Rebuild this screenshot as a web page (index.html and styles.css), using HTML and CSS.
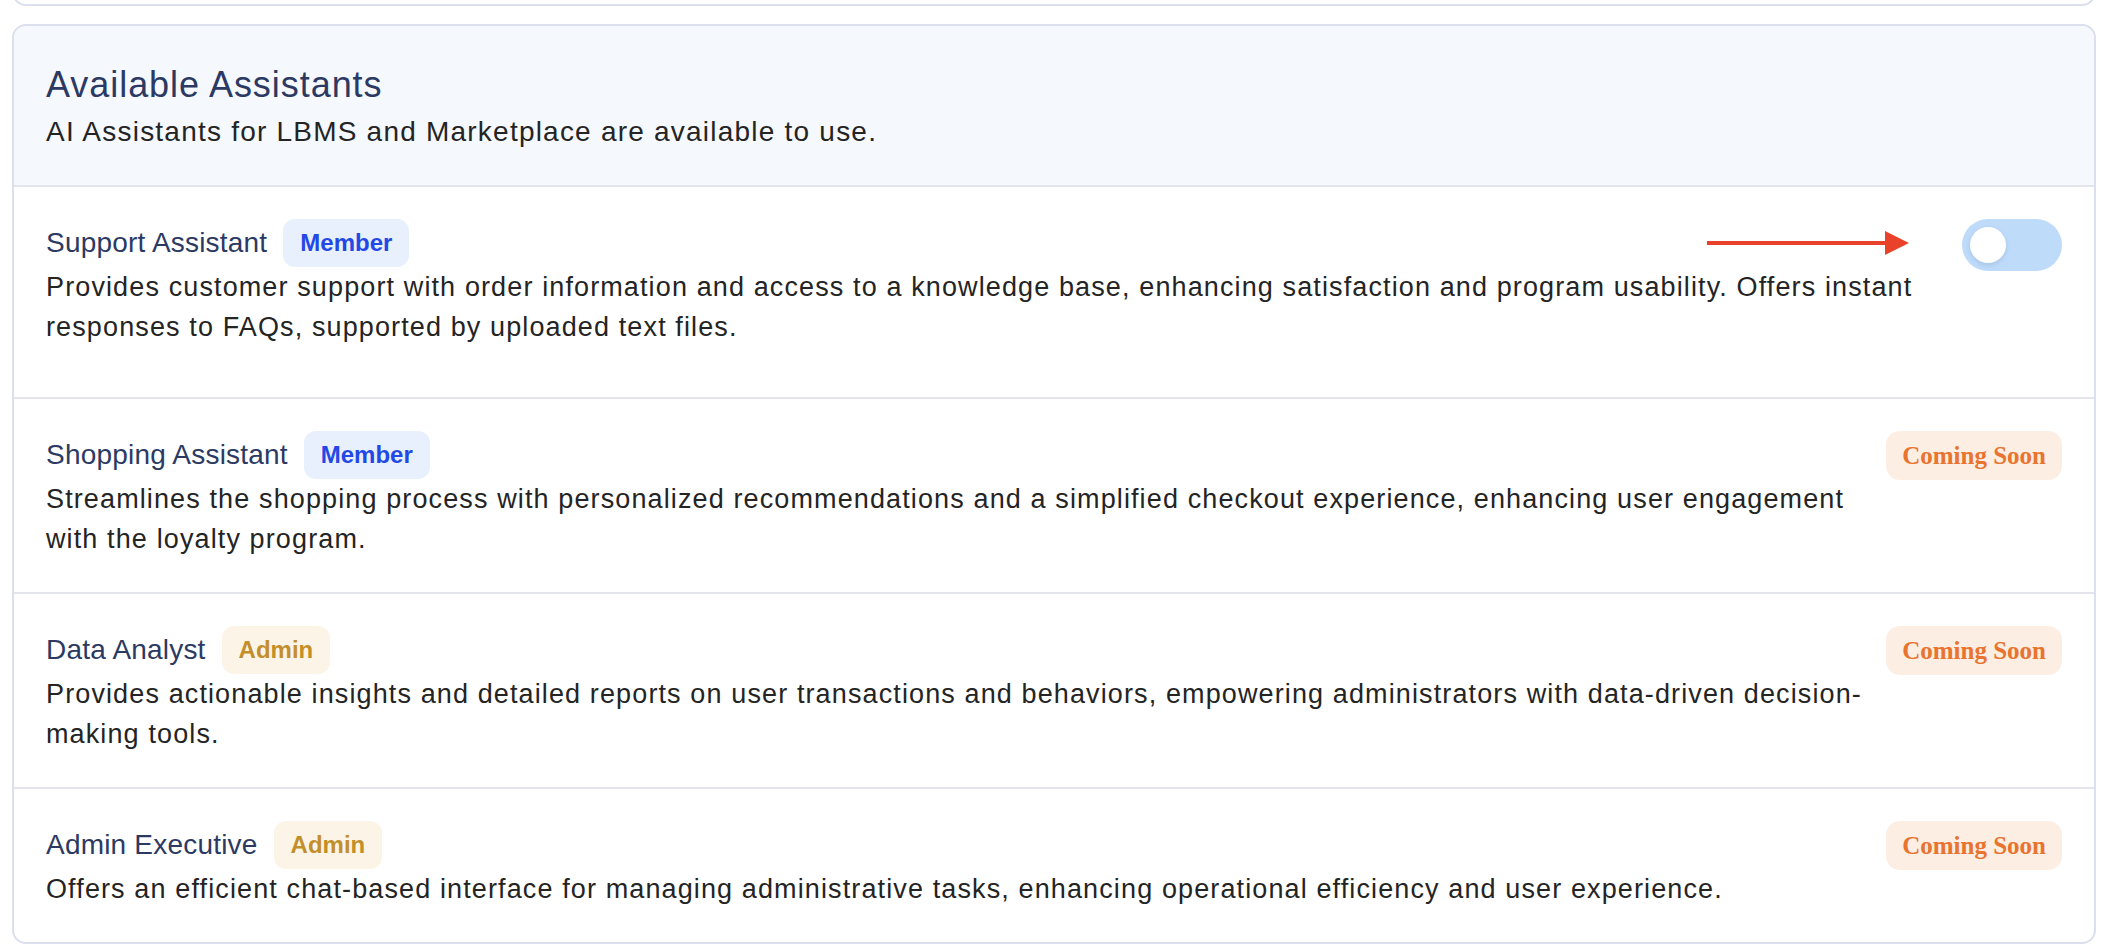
FILE: index.html
```html
<!DOCTYPE html>
<html lang="en">
<head>
<meta charset="utf-8">
<title>Available Assistants</title>
<link rel="stylesheet" href="styles.css">
</head>
<body>
<div class="page">
  <div class="card card-prev"></div>
  <section class="card">
    <header class="card-head">
      <h2 class="card-title">Available Assistants</h2>
      <p class="card-subtitle">AI Assistants for LBMS and Marketplace are available to use.</p>
    </header>
    <ul class="assistant-list">
      <li class="assistant assistant--first">
        <div class="assistant-body">
          <div class="assistant-head">
            <h3 class="assistant-name">Support Assistant</h3>
            <span class="badge badge--member">Member</span>
          </div>
          <p class="assistant-desc">Provides customer support with order information and access to a knowledge base, enhancing satisfaction and program usability. Offers instant responses to FAQs, supported by uploaded text files.</p>
        </div>
        <div class="assistant-action">
          <svg class="annot-arrow" width="202" height="24" viewBox="0 0 202 24" aria-hidden="true">
            <line x1="0" y1="12" x2="182" y2="12" stroke="#e8432a" stroke-width="4"/>
            <polygon points="178,0 202,12 178,24" fill="#e8432a"/>
          </svg>
          <span class="toggle"><span class="toggle-knob"></span></span>
        </div>
      </li>
      <li class="assistant">
        <div class="assistant-body">
          <div class="assistant-head">
            <h3 class="assistant-name">Shopping Assistant</h3>
            <span class="badge badge--member">Member</span>
          </div>
          <p class="assistant-desc">Streamlines the shopping process with personalized recommendations and a simplified checkout experience, enhancing user engagement with the loyalty program.</p>
        </div>
        <div class="assistant-action">
          <span class="soon">Coming Soon</span>
        </div>
      </li>
      <li class="assistant">
        <div class="assistant-body">
          <div class="assistant-head">
            <h3 class="assistant-name">Data Analyst</h3>
            <span class="badge badge--admin">Admin</span>
          </div>
          <p class="assistant-desc">Provides actionable insights and detailed reports on user transactions and behaviors, empowering administrators with data-driven decision-making tools.</p>
        </div>
        <div class="assistant-action">
          <span class="soon">Coming Soon</span>
        </div>
      </li>
      <li class="assistant">
        <div class="assistant-body">
          <div class="assistant-head">
            <h3 class="assistant-name">Admin Executive</h3>
            <span class="badge badge--admin">Admin</span>
          </div>
          <p class="assistant-desc">Offers an efficient chat-based interface for managing administrative tasks, enhancing operational efficiency and user experience.</p>
        </div>
        <div class="assistant-action">
          <span class="soon">Coming Soon</span>
        </div>
      </li>
    </ul>
  </section>
</div>
</body>
</html>
```

FILE: styles.css
```css
html, body {
  margin: 0;
  padding: 0;
  background: #ffffff;
}

body {
  font-family: "Liberation Sans", Arial, sans-serif;
  color: #242424;
  overflow: hidden;
}

.page {
  display: flex;
  flex-direction: column;
  gap: 18px;
  padding: 0 32px 0 12px;
}

.card {
  border: 2px solid #dcdfee;
  border-radius: 14px;
  background: #ffffff;
  overflow: hidden;
}

.card-prev {
  height: 196px;
  margin-top: -194px;
}

.card-head {
  background: #f5f8fc;
  padding: 32px;
  border-bottom: 2px solid #e3e5eb;
}

.card-title {
  margin: 0;
  font-size: 36px;
  font-weight: 400;
  line-height: 54px;
  letter-spacing: 0.95px;
  color: #2c3a63;
}

.card-subtitle {
  margin: 0;
  font-size: 28px;
  line-height: 40.5px;
  letter-spacing: 1.22px;
  color: #242424;
}

.assistant-list {
  list-style: none;
  margin: 0;
  padding: 0;
}

.assistant {
  display: flex;
  align-items: flex-start;
  gap: 12px;
  padding: 32px 32px 33px;
  border-bottom: 2px solid #e4e5ec;
}

.assistant:last-child {
  border-bottom: none;
}

.assistant--first {
  padding-bottom: 50px;
}

.assistant-body {
  flex: 1;
  min-width: 0;
}

.assistant-head {
  display: flex;
  align-items: center;
  gap: 16px;
}

.assistant-name {
  margin: 0;
  font-size: 28px;
  font-weight: 400;
  line-height: 34px;
  letter-spacing: 0.2px;
  color: #2c3a63;
}

.badge {
  display: inline-block;
  font-size: 24px;
  font-weight: 700;
  line-height: 32px;
  padding: 8px 17px;
  border-radius: 12px;
}

.badge--member {
  background: #e7f0fc;
  color: #2448e6;
}

.badge--admin {
  background: #fcf5e7;
  color: #c38f2b;
}

.assistant-desc {
  margin: 0;
  font-size: 27px;
  line-height: 40px;
  letter-spacing: 1.12px;
  color: #242424;
}

.assistant-action {
  flex-shrink: 0;
  position: relative;
  display: flex;
}

.annot-arrow {
  position: absolute;
  right: calc(100% + 53px);
  top: 12px;
}

.toggle {
  display: flex;
  align-items: center;
  width: 100px;
  height: 52px;
  box-sizing: border-box;
  padding: 8px;
  border-radius: 26px;
  background: #bfdbfa;
}

.toggle-knob {
  width: 36px;
  height: 36px;
  border-radius: 50%;
  background: #ffffff;
  box-shadow: 0 2px 5px rgba(60, 90, 140, 0.18);
}

.soon {
  display: inline-block;
  font-family: "Liberation Serif", "Times New Roman", serif;
  font-size: 25px;
  font-weight: 700;
  line-height: 33px;
  padding: 8px 16px;
  border-radius: 14px;
  background: #fdeee3;
  color: #e8742f;
}
```
